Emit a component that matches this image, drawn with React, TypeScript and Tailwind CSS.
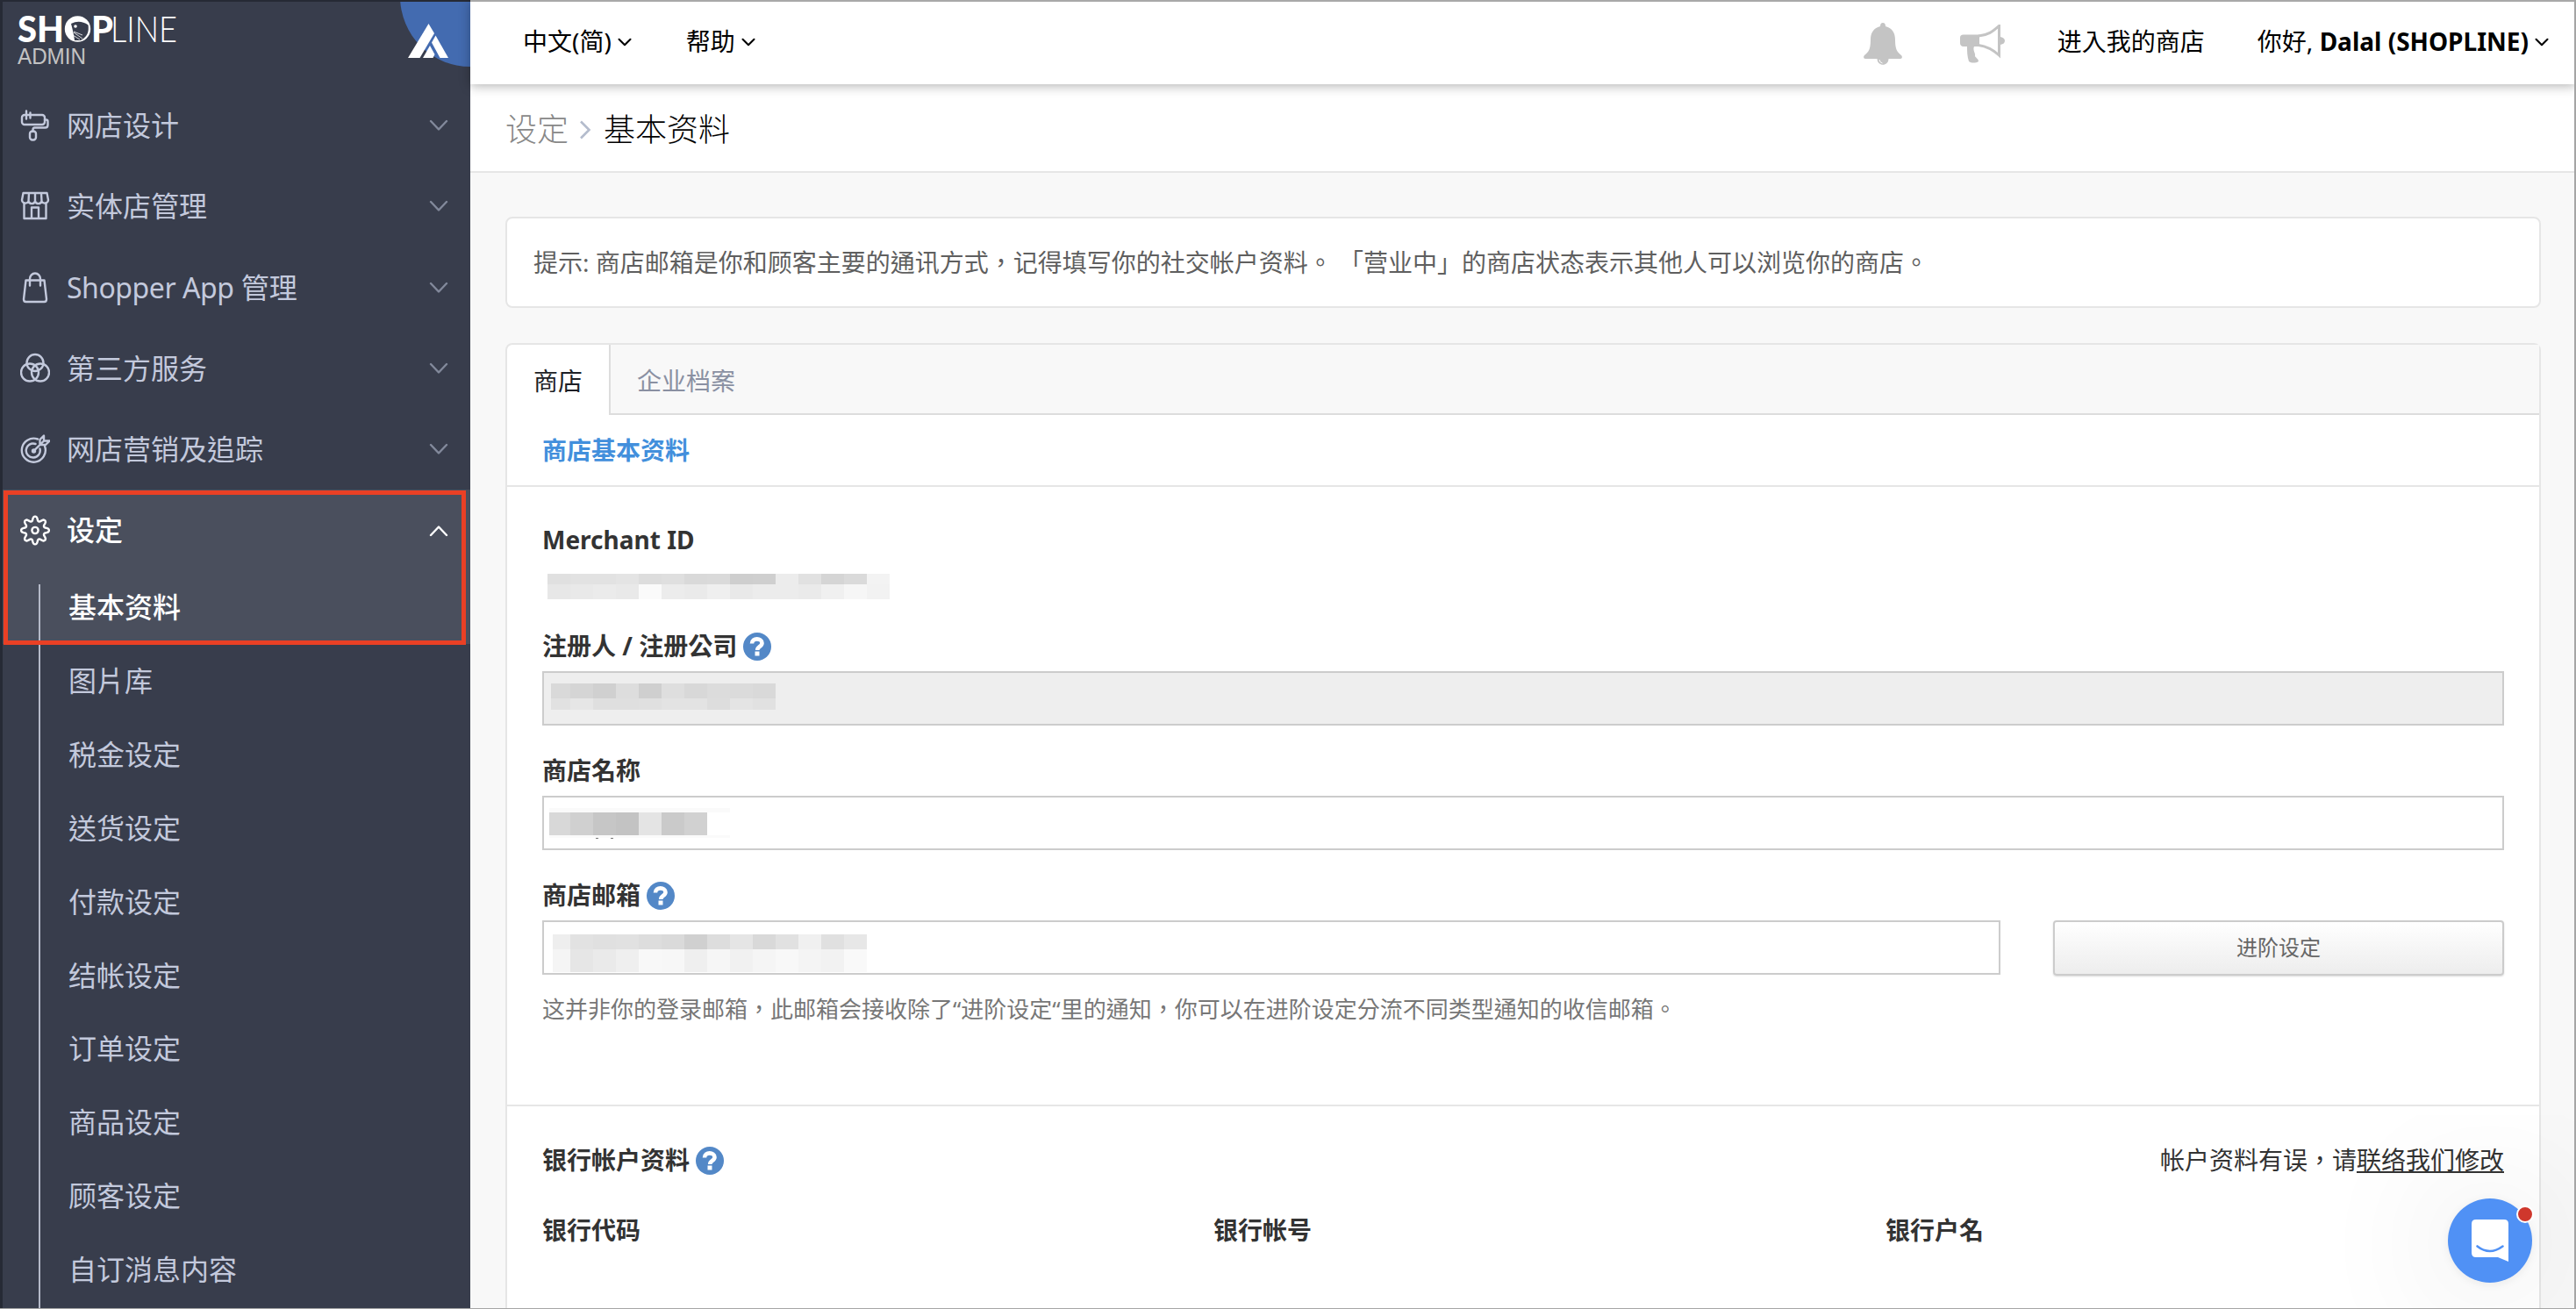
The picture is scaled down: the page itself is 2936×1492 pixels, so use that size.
import { ReactNode } from 'react'
import { ChevronDown } from 'lucide-react'

type Cells = string[]

const navItems = [
  { label: '网店设计', icon: 'paint' },
  { label: '实体店管理', icon: 'store' },
  { latin: 'Shopper App', label: ' 管理', icon: 'bag' },
  { label: '第三方服务', icon: 'circles' },
  { label: '网店营销及追踪', icon: 'target' },
]

const subItems = [
  '图片库',
  '税金设定',
  '送货设定',
  '付款设定',
  '结帐设定',
  '订单设定',
  '商品设定',
  '顾客设定',
  '自订消息内容',
]

// eight rounded teeth around the centre of a 34x36 box
const gearPath =
  Array.from({ length: 96 }, (_, i) => {
    const t = (i / 96) * Math.PI * 2
    const wave = Math.cos(8 * t)
    const r = 13.4 + 2.5 * Math.sign(wave) * Math.pow(Math.abs(wave), 0.6)
    return `${i ? 'L' : 'M'}${(17 + r * Math.sin(t)).toFixed(2)} ${(17.5 - r * Math.cos(t)).toFixed(2)}`
  }).join('') + 'z'

const icons: Record<string, ReactNode> = {
  paint: (
    <>
      <rect x="2" y="6" width="26" height="11" rx="3" />
      <path d="M7 1.500v9M11.500 3.500v6M28 11.500h1.500q2 0 2 2v4q0 3-3 3H16.500q-2 0-2 2.500v2" />
      <rect x="11" y="24.500" width="7" height="10" rx="3" />
    </>
  ),
  store: (
    <>
      <path d="M3.500 3h27l1.500 8a4 4 0 0 1-7.500 1.500 4 4 0 0 1-7.500 0 4 4 0 0 1-7.500 0A4 4 0 0 1 2 11zM10 3l-.5 9.500M17 3v9.500M24 3l.5 9.500" />
      <path d="M4.500 15v17h25V15M13 32V19.500h8V32" />
    </>
  ),
  bag: (
    <path d="M6.500 9.500h21l2.500 21.500q0 3-2.500 3h-21q-2.500 0-2.500-3zM11 15.500V8a6 6.500 0 0 1 12 0v7.500" />
  ),
  circles: (
    <>
      <circle cx="17" cy="11.500" r="9.500" />
      <circle cx="11" cy="22.500" r="10" />
      <circle cx="23" cy="22.500" r="10" />
    </>
  ),
  target: (
    <>
      <path d="M20 6.500A13.500 13.500 0 1 0 28 14.500" />
      <path d="M17.500 12a8 8 0 1 0 5 5.500" />
      <path d="M15.500 20L27 8.500M22.500 13V7l4.500-4.500v6h6.500L29 13h-6" />
      <circle cx="15.500" cy="20" r="1.500" />
    </>
  ),
  gear: (
    <>
      <path d={gearPath} />
      <circle cx="17" cy="17.500" r="3.600" />
    </>
  ),
}

function NavIcon({ name }: { name: string }) {
  return (
    <svg
      className="h-[36px] w-[34px] shrink-0"
      viewBox="0 0 34 36"
      fill="none"
      stroke="currentColor"
      strokeWidth="2.4"
      strokeLinecap="round"
      strokeLinejoin="round"
    >
      {icons[name]}
    </svg>
  )
}

function Caret({ up }: { up?: boolean }) {
  return (
    <svg
      className="h-[14px] w-[22px]"
      viewBox="0 0 22 14"
      fill="none"
      stroke="currentColor"
      strokeWidth="2.4"
      strokeLinecap="round"
      strokeLinejoin="round"
    >
      <path d={up ? 'M2 12l9-9.500 9 9.500' : 'M2 2l9 9.500L20 2'} />
    </svg>
  )
}

function Help() {
  return (
    <span className="mt-0.5 flex h-8 w-8 items-center justify-center rounded-full bg-[#5388c7]">
      <svg className="h-6 w-5" viewBox="0 0 20 24" fill="none" stroke="#fff" strokeWidth="4.600">
        <path d="M4 8.500C4 1.500 15.500 2 15.500 8c0 4-5.300 3.800-5.300 8" />
        <path d="M10 17.500v5" strokeWidth="5" />
      </svg>
    </span>
  )
}

// masked value, one strip of grey cells per row
function Mask({ rows, heights, first }: { rows: Cells[]; heights: number[]; first: number }) {
  return (
    <div>
      {rows.map((row, i) => (
        <div key={i} className="flex">
          {row.map((c, j) => (
            <div
              key={j}
              style={{ background: c, height: heights[i], width: j === 0 ? first : 26 }}
            />
          ))}
        </div>
      ))}
    </div>
  )
}

function Label({ children, help }: { children: ReactNode; help?: boolean }) {
  return (
    <div className="flex h-10 items-center gap-[7px] text-[28px] font-bold leading-10 text-[#333]">
      <span>{children}</span>
      {help && <Help />}
    </div>
  )
}

function Logo() {
  return (
    <svg className="absolute left-0 top-0" width="220" height="84" viewBox="0 0 220 84">
      <g fill="#fff" fontFamily="Lato, sans-serif" fontSize="41">
        <text x="20" y="48" fontWeight="900" textLength="53" lengthAdjust="spacingAndGlyphs">SH</text>
        <text x="104" y="48" fontWeight="900" textLength="25" lengthAdjust="spacingAndGlyphs">P</text>
        <text x="126" y="48" fontWeight="300" textLength="76" lengthAdjust="spacingAndGlyphs">LINE</text>
      </g>
      <circle cx="88.500" cy="33" r="14.700" fill="#fff" />
      <path d="M81 27q10-5 19.500 1.500q2 12-8.500 17.500h-7q-1-8-4-19z" fill="#383d4c" />
      <circle cx="86" cy="30" r="1.800" fill="#fff" />
      <path d="M84 37l10 7M83 40l8 5M84 36l10 4" stroke="#fff" strokeWidth=".8" />
      <text x="20" y="73" fill="#c3c3c3" fontFamily="Liberation Sans, Arial, sans-serif" fontSize="25" textLength="78" lengthAdjust="spacingAndGlyphs">ADMIN</text>
    </svg>
  )
}

function Sidebar() {
  return (
    <aside className="relative flex w-[536px] shrink-0 flex-col overflow-hidden border-l-[3px] border-t-2 border-[#262a35] bg-[#383d4c] text-[32px] text-[#c3c9dc]">
      <div className="relative -ml-[3px] -mt-0.5 h-[97px] shrink-0">
        <Logo />
        <div className="absolute -top-[84px] left-[456px] h-40 w-40 rounded-full bg-[#436bb0]" />
        <svg className="absolute left-[464px] top-[26px]" width="48" height="41" viewBox="0 0 48 41" fill="#fff">
          <path d="M24.500 1L31 12 14.500 40H1z" />
          <path d="M32.500 14.500L47 40H37.500L28 22.500z" />
          <path d="M26 26L31.500 36 29.500 40H18z" />
        </svg>
      </div>
      {navItems.map((item) => (
        <div key={item.label} className="flex h-[92.3px] shrink-0 items-center pl-5 pr-[25px]">
          <NavIcon name={item.icon} />
          <span className="ml-[19px] flex-1 whitespace-pre">
            {item.latin && <span className="tracking-[-0.45px]">{item.latin}</span>}
            {item.label}
          </span>
          <span className="text-[#82899b]">
            <Caret />
          </span>
        </div>
      ))}
      <div className="-ml-[3px] h-[176px] shrink-0 bg-[#4a4f5d] text-white">
        <div className="flex h-[92.3px] items-center pl-[23px] pr-[25px]">
          <NavIcon name="gear" />
          <span className="-mt-0.5 ml-[19px] flex-1 font-medium">设定</span>
          <Caret up />
        </div>
        <div className="flex h-[83.7px] items-center pb-px pl-[78px] font-medium">基本资料</div>
      </div>
      {subItems.map((item) => (
        <div key={item} className="flex h-[83.8px] shrink-0 items-center pl-[75px]">
          {item}
        </div>
      ))}
      {/* tree line next to the sub menu */}
      <div className="absolute left-[41px] top-[664px] h-[828px] w-0.5 bg-[#b4b9c8]" />
      <div className="absolute left-[1px] top-[557px] h-[176px] w-[527px] border-[5px] border-[#ea4025]" />
    </aside>
  )
}

function TopBar() {
  return (
    <header className="relative z-10 flex h-24 shrink-0 items-center border-t-2 border-[#a9a9a9] bg-white pb-1 text-[28px] text-black shadow-[0_2px_12px_rgba(0,0,0,0.3)]">
      <div className="flex items-center pl-[60px]">
        <span>中文(简)</span>
        <ChevronDown className="ml-0.5 mt-0.5 h-[26px] w-[26px]" strokeWidth={1.9} />
      </div>
      <div className="flex items-center pl-[57px]">
        <span>帮助</span>
        <ChevronDown className="ml-0.5 mt-0.5 h-[26px] w-[26px]" strokeWidth={1.9} />
      </div>
      <div className="ml-auto flex items-center">
        <svg className="mt-1.5 h-12 w-11" viewBox="0 0 44 48" fill="#c4c4c4">
          <path d="M22 0c2 0 3 1.500 3 4 8 2 11 8 11 15 0 11 2 14 7 18 1.500 1.500 1 4-1 4H2c-2 0-2.500-2.500-1-4 5-4 7-7 7-18C8 12 11 6 19 4c0-2.500 1-4 3-4z" />
          <path d="M15.500 41h13c0 9-13 9-13 0z" />
          <path d="M18 42q0 3 3.500 4" fill="none" stroke="#fff" strokeWidth="1" />
        </svg>
        <svg className="ml-[66px] mt-1.5 h-[44px] w-[51px]" viewBox="0 0 51 44" fill="#c4c4c4">
          <path d="M4 11.500h18v13.500H16c-2 4 2 8 1 11 1 2 4 3 4 6-3 2-8 2-11 0-2-6-2-12-2-17H4c-3 0-4-2-4-4v-6c0-2 1-3.500 4-3.500z" />
          <path d="M21 13C33 12 38 7 44.500 1.500V35C38 29 32 25 21 23.500" fill="none" stroke="#c4c4c4" strokeWidth="3" />
          <path d="M46 14q5 1 5 4.500T46 23z" />
        </svg>
        <span className="ml-[60px]">进入我的商店</span>
        <span className="ml-[60px]">
          你好, <b>Dalal (SHOPLINE)</b>
        </span>
        <ChevronDown className="ml-0.5 mr-[26px] mt-0.5 h-[26px] w-[26px]" strokeWidth={1.9} />
      </div>
    </header>
  )
}

function BasicInfo() {
  return (
    <section className="h-[706px] shrink-0 border-b-2 border-[#e6e6e6] px-10 pt-[40px]">
      <Label>Merchant ID</Label>
      <div className="ml-[6px] mt-[19px] h-[29px]">
        <Mask
          first={26}
          heights={[12, 17]}
          rows={[
            ['#e0e0e0', '#e2e2e2', '#e2e2e2', '#e4e4e4', '#dddddd', '#dfdfdf', '#d9d9d9', '#dadada', '#cecece', '#cfcfcf', '#ececec', '#e1e1e1', '#d5d5d5', '#dadada', '#f3f3f3'],
            ['#e7e7e7', '#e9e9e9', '#ebebeb', '#e9e9e9', '#fafafa', '#ececec', '#eaeaea', '#efefef', '#e9e9e9', '#ececec', '#ececec', '#eaeaea', '#f0f0f0', '#f6f6f6', '#f2f2f2'],
          ]}
        />
      </div>
      <div className="mt-[33px]">
        <Label help>注册人 / 注册公司</Label>
      </div>
      <div className="mt-[9px] h-[62px] border-2 border-[#ccc] bg-[#eee] pl-2 pt-3">
        <Mask
          first={22}
          heights={[17, 13]}
          rows={[
            ['#d9d9d9', '#d5d5d5', '#d0d0d0', '#dddddd', '#cfcfcf', '#dedede', '#d8d8d8', '#dcdcdc', '#dbdbdb', '#d9d9d9'],
            ['#e1e1e1', '#e6e6e6', '#dfdfdf', '#dfdfdf', '#e0e0e0', '#e3e3e3', '#e3e3e3', '#dddddd', '#e4e4e4', '#e1e1e1'],
          ]}
        />
      </div>
      <div className="mt-[31px]">
        <Label>商店名称</Label>
      </div>
      <div className="mt-[9px] h-[62px] border-2 border-[#ccc] bg-white pl-1.5 pt-3">
        <Mask
          first={24}
          heights={[5, 26, 3]}
          rows={[
            ['#fafafa', '#fafafa', '#fafafa', '#fafafa', '#fafafa', '#fafafa', '#fafafa', '#fafafa'],
            ['#d8d8d8', '#d0d0d0', '#c6c6c6', '#c3c3c3', '#e4e4e4', '#cacaca', '#d1d1d1'],
            ['#fafafa', '#fafafa', '#fafafa', '#fafafa', '#fafafa', '#fafafa', '#fafafa', '#fafafa'],
          ]}
        />
        {/* descenders left under the mask */}
        <div className="ml-[53px] flex gap-[14px]">
          <div className="h-px w-[3px] bg-[#777]" />
          <div className="h-px w-[3px] bg-[#777]" />
        </div>
      </div>
      <div className="mt-[31px]">
        <Label help>商店邮箱</Label>
      </div>
      <div className="mt-[9px] flex gap-[60px]">
        <div className="h-[62px] flex-1 border-2 border-[#ccc] bg-white pl-[10px] pt-[14px]">
          <Mask
            first={20}
            heights={[17, 26]}
            rows={[
              ['#eeeeee', '#e2e2e2', '#e0e0e0', '#e1e1e1', '#dddddd', '#dadada', '#d0d0d0', '#dddddd', '#e5e5e5', '#d9d9d9', '#e1e1e1', '#f0f0f0', '#e0e0e0', '#e7e7e7'],
              ['#f5f5f5', '#e6e6e6', '#eaeaea', '#efefef', '#f8f8f8', '#f7f7f7', '#efefef', '#f6f6f6', '#f1f1f1', '#f5f5f5', '#f8f8f8', '#f4f4f4', '#f2f2f2', '#f9f9f9'],
            ]}
          />
        </div>
        <button className="h-[63px] w-[514px] rounded border-2 border-[#ccc] bg-linear-to-b from-white to-[#ededed] pb-0.5 text-[24px] text-[#666] shadow-[0_1px_2px_rgba(0,0,0,0.15)]">
          进阶设定
        </button>
      </div>
      <p className="mt-[18px] text-[26px] leading-10 text-[#777]">
        这并非你的登录邮箱，此邮箱会接收除了“进阶设定“里的通知，你可以在进阶设定分流不同类型通知的收信邮箱。
      </p>
    </section>
  )
}

function BankInfo() {
  return (
    <section className="px-10 pt-[41px]">
      <div className="flex justify-between">
        <Label help>银行帐户资料</Label>
        <p className="text-[28px] leading-10 text-[#333]">
          帐户资料有误，请
          <a className="underline decoration-2 underline-offset-[2px] [text-decoration-skip-ink:none]">联络我们修改</a>
        </p>
      </div>
      <div className="mt-10 grid grid-cols-[765px_766px_1fr]">
        <Label>银行代码</Label>
        <Label>银行帐号</Label>
        <Label>银行户名</Label>
      </div>
    </section>
  )
}

function ChatLauncher() {
  return (
    <div className="absolute left-[2790px] top-[1366px] z-20 h-24 w-24 rounded-full bg-[#5091f5] shadow-[0_2px_12px_rgba(0,0,0,0.06),0_4px_160px_rgba(0,0,0,0.16)]">
      <svg className="absolute left-[27px] top-6" width="42" height="48" viewBox="0 0 42 48">
        <path d="M5 0h32q5 0 5 5v43l-12-5H5q-5 0-5-5V5q0-5 5-5z" fill="#fff" />
        <path d="M6.500 30.500q14 11 29 0" fill="none" stroke="#5091f5" strokeWidth="2.600" strokeLinecap="round" />
      </svg>
      <div className="absolute left-[78px] top-2 h-5 w-5 rounded-full border-2 border-white bg-[#cf372c]" />
    </div>
  )
}

export default function App() {
  return (
    <div className="relative flex h-[1492px] w-[2936px] overflow-hidden bg-[#f8f8f8] font-['Noto_Sans','Noto_Sans_CJK_TC',sans-serif]">
      <Sidebar />
      <div className="flex min-w-0 flex-1 flex-col">
        <TopBar />
        <div className="flex h-[101px] shrink-0 items-center border-b-2 border-[#e6e6e6] bg-white pl-10 pt-[5px] text-[36px] font-light">
          <span className="text-[#888]">设定</span>
          <svg className="ml-[12px] mr-[14px] h-[22px] w-[14px]" viewBox="0 0 14 22" fill="none" stroke="#b4bccd" strokeWidth="2.600">
            <path d="M2 1.500l9.500 9.500L2 20.500" />
          </svg>
          <span className="text-black">基本资料</span>
        </div>
        <main className="flex flex-1 flex-col overflow-hidden pl-10 pr-10 pt-[50px]">
          <div className="flex h-[104px] shrink-0 items-center rounded-lg border-2 border-[#e6e6e6] bg-white px-[30px] text-[28px] text-[#5f5f5f]">
            提示: 商店邮箱是你和顾客主要的通讯方式，记得填写你的社交帐户资料。 「营业中」的商店状态表示其他人可以浏览你的商店。
          </div>
          <div className="mt-10 flex min-h-0 flex-1 flex-col rounded-t-lg border-x-2 border-t-2 border-[#e6e6e6] bg-white">
            <div className="flex h-20 shrink-0 text-[28px]">
              <div className="flex w-[118px] items-center border-r-2 border-[#ddd] pl-[30px] pt-0.5 text-[#1d1f26]">商店</div>
              <div className="flex flex-1 items-center border-b-2 border-[#ddd] bg-[#f8f8f8] pl-[30px] pt-1 text-[#8a90a2]">企业档案</div>
            </div>
            <div className="flex h-[82px] shrink-0 items-center border-b-2 border-[#e6e6e6] pl-10 text-[28px] font-bold text-[#428fdc]">
              商店基本资料
            </div>
            <BasicInfo />
            <BankInfo />
          </div>
        </main>
      </div>
      <ChatLauncher />
      {/* window edge */}
      <div className="pointer-events-none absolute inset-0 z-30 border-b border-r-2 border-[#a5a5a5]" />
    </div>
  )
}
